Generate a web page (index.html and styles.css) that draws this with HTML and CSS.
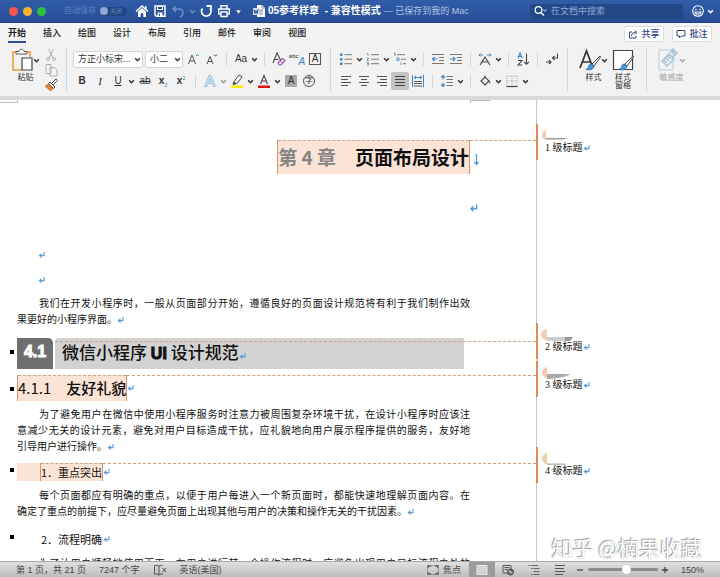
FILE: index.html
```html
<!DOCTYPE html>
<html lang="zh-CN">
<head>
<meta charset="utf-8">
<title>05参考样章</title>
<link rel="stylesheet" href="styles.css">
</head>
<body>
<svg class="defs" aria-hidden="true">
  <symbol id="chev" viewBox="0 0 6 6"><path d="M1 2l2 2 2-2" fill="none" stroke="currentColor" stroke-width="1.3"/></symbol>
  <symbol id="ret" viewBox="0 0 7 8"><path d="M6 1v3.600H2M3.600 2.600L1.400 4.600l2.200 2" fill="none" stroke="#5b9bd5" stroke-width="1.100"/></symbol>
  <symbol id="brush" viewBox="0 0 16 16"><path d="M15 1L7 9l2 2 6.500-9z" fill="#fff" stroke="#444" stroke-width="1"/><path d="M6.500 9c-2 0-3 1-3 3 0 1-1 2-2.500 2 2 1.500 7 1.500 8-2.500z" fill="#4a9ad8" stroke="#2f6ea8" stroke-width=".8"/></symbol>
</svg>

<header class="titlebar">
  <div class="lights"><i class="red"></i><i class="amber"></i><i class="green"></i></div>
  <label class="autosave">自动保存 <input type="checkbox" role="switch"><span class="toggle">关闭</span></label>
  <nav class="quick" aria-label="快速访问">
    <button aria-label="主页"><svg class="ic" viewBox="0 0 14 14"><path d="M1 7.500L7 2l6 5.500M10.800 2v3" fill="none" stroke="#fff" stroke-width="1.500"/><path d="M3 7.500L7 4l4 3.500V13H8.300V9.300H5.700V13H3z" fill="#fff"/></svg></button>
    <button aria-label="保存"><svg class="ic" viewBox="0 0 14 14"><path d="M2 2h10v10.300H3.300L2 11z" fill="none" stroke="#fff" stroke-width="1.500"/><path d="M4 2h6v4H4zM4.500 8.500h5V12h-5z" fill="#fff"/><path d="M5 3h4v2H5zM6 9.700h1V12H6z" fill="#28529c"/></svg></button>
    <button class="dim" aria-label="撤销"><svg class="ic" viewBox="0 0 14 14"><path d="M5 2L2 5l3 3M2 5h6c5 0 5 6 1 8" fill="none" stroke="currentColor" stroke-width="1.400"/></svg></button>
    <button class="dim more" aria-label="撤销选项"><svg class="chev"><use href="#chev"/></svg></button>
    <button aria-label="重做"><svg class="ic" viewBox="0 0 14 14"><path d="M3.500 4.500a4.700 4.700 0 1 0 7.500 0M7.500 2H12v4.500" fill="none" stroke="#fff" stroke-width="1.800"/></svg></button>
    <button aria-label="打印"><svg class="ic" viewBox="0 0 14 14"><path d="M4 5V1.700h6V5M3.500 10H1.700V5h10.600v5h-1.800M4 8h6v4.500H4z" fill="none" stroke="#fff" stroke-width="1.400"/></svg></button>
    <button class="more" aria-label="自定义"><svg class="chev" viewBox="0 0 6 6"><path d="M1 2h4L3 5z" fill="#fff"/></svg></button>
  </nav>
  <div class="doc-title">
    <svg class="ic" viewBox="0 0 14 14"><path d="M5 1h5l3 3v9H5z" fill="#fff"/><path d="M10 1v3h3M7 6h4M7 8h4M7 10h4" stroke="#7a8cab" fill="none"/><path d="M1 4h6v7H1z" fill="#d7deeb"/><path d="M2 5.500l1 4 1-3 1 3 1-4" fill="none" stroke="#28529c"/></svg>
    <b>05参考样章 &nbsp;- 兼容性模式</b><span>— 已保存到我的 Mac</span>
  </div>
  <label class="search">
    <svg class="ic" viewBox="0 0 14 14"><circle cx="5.500" cy="6" r="3.300" fill="none" stroke="#fff" stroke-width="1.200"/><path d="M8 8.500L11 11.500" stroke="#fff" stroke-width="1.300"/><path d="M10 5.500l1.700 1.700 1.700-1.700" fill="none" stroke="#fff"/></svg>
    <input type="search" placeholder="在文档中搜索" aria-label="在文档中搜索">
  </label>
  <button class="smile" aria-label="反馈"><svg class="ic" viewBox="0 0 14 14"><g fill="none" stroke="#fff" stroke-width="1.100"><circle cx="7" cy="7" r="5.300"/><path d="M4 8c1 3 5 3 6 0z"/></g><circle cx="5" cy="5.500" r=".8" fill="#fff"/><circle cx="9" cy="5.500" r=".8" fill="#fff"/></svg><svg class="chev"><use href="#chev"/></svg></button>
</header>

<div class="tabs">
  <nav>
    <a href="#" class="active">开始</a><a href="#">插入</a><a href="#">绘图</a><a href="#">设计</a><a href="#">布局</a><a href="#">引用</a><a href="#">邮件</a><a href="#">审阅</a><a href="#">视图</a>
  </nav>
  <div class="actions">
    <button><svg class="small" viewBox="0 0 10 10"><path d="M4 3H1.500v6H8V7M3.500 7c0-3 2-3.500 4-3.500M6.500 1.500l2.500 2-2.500 2" fill="none" stroke="#33466f"/></svg>共享</button>
    <button><svg class="small" viewBox="0 0 10 10"><path d="M1 1.500h8v5.500H5.500L3.500 9V7H1z" fill="none" stroke="#33466f"/></svg>批注</button>
  </div>
</div>

<div class="ribbon">
  <section class="group clipboard">
    <button class="big">
      <span class="face"><svg class="large" viewBox="0 0 22 24"><path d="M5 4H2v18h9M16 4h3v5" fill="none" stroke="#ee9a3a" stroke-width="1.600"/><path d="M5 6V3.500h3C8 .5 13 .5 13 3.500h3V6z" fill="#fff" stroke="#555"/><path d="M11 10h10v12H11z" fill="#fff" stroke="#444" stroke-width="1.200"/></svg><svg class="chev"><use href="#chev"/></svg></span>
      <span>粘贴</span>
    </button>
    <div class="stack">
      <button aria-label="剪切"><svg class="ic" viewBox="0 0 14 14"><g fill="none" stroke="#b0b0b0"><path d="M4.500 1L9 10M9.500 1L5 10"/><circle cx="4" cy="11" r="1.500"/><circle cx="10" cy="11" r="1.500"/></g></svg></button>
      <button aria-label="复制"><svg class="ic" viewBox="0 0 14 14"><path d="M2 1.500h5v9H2zM6 4.500h4.500L13 7v6H6z" fill="#f4f4f4" stroke="#b0b0b0"/></svg></button>
      <button aria-label="格式刷"><svg class="ic" viewBox="0 0 14 14"><path d="M8 5l4-4 1.500 1.500-4 4" fill="#fff" stroke="#444"/><path d="M6 4l5 5-1.500 1.500-5-5z" fill="#fff" stroke="#444"/><path d="M4.500 6L9 10.500 6.500 13 1 8z" fill="#e8823a" stroke="#b55c1c" stroke-width=".6"/></svg></button>
    </div>
  </section>

  <section class="group">
    <div class="row">
      <span class="pick font"><select aria-label="字体"><option>方正小标宋...</option></select><svg class="chev"><use href="#chev"/></svg></span>
      <span class="pick size"><select aria-label="字号"><option>小二</option></select><svg class="chev"><use href="#chev"/></svg></span>
      <button aria-label="增大字号"><svg class="ic" viewBox="0 0 14 14"><path d="M1.500 12L5 3l3.500 9M2.800 9h4.500" fill="none" stroke="#555"/><path d="M9 4l1.500-1.700L12 4" fill="none" stroke="#3a7"/></svg></button>
      <button aria-label="减小字号"><svg class="ic" viewBox="0 0 14 14"><path d="M2 12l3-7.500L8 12M3 9.500h4" fill="none" stroke="#555"/><path d="M9 2.500l1.500 1.700L12 2.500" fill="none" stroke="#357"/></svg></button>
      <i class="sep"></i>
      <button>Aa</button><button class="more" aria-label="大小写选项"><svg class="chev"><use href="#chev"/></svg></button>
      <i class="sep"></i>
      <button aria-label="清除格式"><svg class="ic" viewBox="0 0 14 14"><path d="M1 11L5 1l3.500 7M2.500 7.500h4" fill="none" stroke="#444" stroke-width="1.100"/><path d="M6 11l4.500-4.500 2.500 2L9 13H7.500z" fill="#fff" stroke="#9a4fb0" stroke-width="1.200"/><path d="M8 9l2.500 2" stroke="#9a4fb0"/></svg></button>
      <button class="phonetic" aria-label="拼音指南"><small>abc</small><em>A</em></button>
      <button><span class="boxed">A</span></button>
    </div>
    <div class="row">
      <button><b>B</b></button><button><i class="serif">I</i></button><button><u>U</u></button><button class="more" aria-label="下划线选项"><svg class="chev"><use href="#chev"/></svg></button>
      <button><s>ab</s></button><button><span><b>x</b><sub>2</sub></span></button><button><span><b>x</b><sup>2</sup></span></button>
      <i class="sep"></i>
      <button aria-label="文本效果"><svg class="ic" viewBox="0 0 14 14"><path d="M1.500 12.500L6 1.500h2l4.500 11h-2.300L9 9.500H5l-1.200 3zM5.700 7.500h2.600L7 4z" fill="#d5e6f3" stroke="#9dbfd9"/></svg></button><button class="more pale" aria-label="文本效果选项"><svg class="chev"><use href="#chev"/></svg></button>
      <button aria-label="突出显示"><svg class="ic" viewBox="0 0 14 14"><path d="M1 11.500h12V14H1z" fill="#ffee00"/><path d="M4 7.500l5-6.500 3 2-5 6.500-4 1z" fill="#fff" stroke="#444"/><path d="M4 7.500l3 2-4 1z" fill="#555"/></svg></button><button class="more" aria-label="突出显示选项"><svg class="chev"><use href="#chev"/></svg></button>
      <button aria-label="字体颜色"><svg class="ic" viewBox="0 0 14 14"><path d="M1 11.500h12V14H1z" fill="#d6140a"/><path d="M3.500 10L7 1.500l3.500 8.500M4.800 7h4.500" fill="none" stroke="#444" stroke-width="1.100"/></svg></button><button class="more" aria-label="字体颜色选项"><svg class="chev"><use href="#chev"/></svg></button>
      <button><span class="shaded">A</span></button>
      <button><span class="ringed">字</span></button>
    </div>
  </section>

  <section class="group">
    <div class="row">
      <button aria-label="项目符号"><svg class="ic" viewBox="0 0 14 14"><path d="M1 1.500h2.500V4H1zM1 6h2.500v2.500H1zM1 10.500h2.500V13H1z" fill="#3f86c2"/><path d="M5.500 2.700H13M5.500 7.200H13M5.500 11.700H13" stroke="#777"/></svg></button><button class="more" aria-label="项目符号选项"><svg class="chev"><use href="#chev"/></svg></button>
      <button aria-label="编号"><svg class="ic" viewBox="0 0 14 14"><path d="M1 1.500h1V4M1 6h1.500L1 8.500h1.700M1 10.500h1.500V13H1M2.500 11.700H1" fill="none" stroke="#5b93c4" stroke-width=".9"/><path d="M5 2.700h8M5 7.200h8M5 11.700h8" stroke="#777"/></svg></button><button class="more" aria-label="编号选项"><svg class="chev"><use href="#chev"/></svg></button>
      <button aria-label="多级列表"><svg class="ic" viewBox="0 0 14 14"><path d="M1 1h1v3M4 6h2v2.500H4zM8 10.500v2.500" fill="none" stroke="#5b93c4"/><path d="M4 2.700h8M8 7.200h5M10 11.700h3" stroke="#777"/></svg></button><button class="more" aria-label="多级列表选项"><svg class="chev"><use href="#chev"/></svg></button>
      <i class="sep"></i>
      <button aria-label="减少缩进"><svg class="ic" viewBox="0 0 14 14"><path d="M1 2.500h12M8 5.500h5M8 8.500h5M1 11.500h12" stroke="#777"/><path d="M6.500 7h-5M3.500 5l-2 2 2 2" fill="none" stroke="#3f86c2" stroke-width="1.200"/></svg></button>
      <button aria-label="增加缩进"><svg class="ic" viewBox="0 0 14 14"><path d="M1 2.500h12M8 5.500h5M8 8.500h5M1 11.500h12" stroke="#777"/><path d="M1 7h5M4 5l2 2-2 2" fill="none" stroke="#3f86c2" stroke-width="1.200"/></svg></button>
      <i class="sep"></i>
      <button aria-label="中文版式"><svg class="ic" viewBox="0 0 14 14"><path d="M2 13l5-8 5 8M4 10h6" fill="none" stroke="#444" stroke-width="1.100"/><path d="M5 3H1M2.500 1.500L1 3l1.500 1.500M9 3h4M11.500 1.500L13 3l-1.500 1.500" fill="none" stroke="#3f86c2"/></svg></button><button class="more" aria-label="中文版式选项"><svg class="chev"><use href="#chev"/></svg></button>
      <i class="sep"></i>
      <button aria-label="排序"><svg class="ic" viewBox="0 0 14 14"><path d="M2 6l2-5 2 5M2.500 4.500h3" fill="none" stroke="#3f86c2" stroke-width="1.100"/><path d="M2 8.500h4L2 13h4.300M10.500 1.500V12M8 9.800l2.500 2.500L13 9.800" fill="none" stroke="#444" stroke-width="1.100"/></svg></button>
      <i class="sep"></i>
      <button aria-label="显示段落标记"><svg class="ic" viewBox="0 0 14 14"><path d="M1 10h5M4 8l2 2-2 2M12.500 1.500V6H7.500M9.500 4l-2 2 2 2" fill="none" stroke="#444" stroke-width="1.100"/></svg></button>
    </div>
    <div class="row">
      <button aria-label="左对齐"><svg class="ic" viewBox="0 0 14 14"><path d="M2 2.500h10M2 5.500h7M2 8.500h10M2 11.500h7" stroke="#555"/></svg></button>
      <button aria-label="居中"><svg class="ic" viewBox="0 0 14 14"><path d="M2 2.500h10M4 5.500h6M2 8.500h10M4 11.500h6" stroke="#555"/></svg></button>
      <button aria-label="右对齐"><svg class="ic" viewBox="0 0 14 14"><path d="M2 2.500h10M5 5.500h7M2 8.500h10M5 11.500h7" stroke="#555"/></svg></button>
      <button class="pressed" aria-label="两端对齐"><svg class="ic" viewBox="0 0 14 14"><path d="M2 2.500h10M2 5.500h10M2 8.500h10M2 11.500h10" stroke="#444"/></svg></button>
      <button aria-label="分散对齐"><svg class="ic" viewBox="0 0 14 14"><path d="M1.500 1v12M12.500 1v12M3 3.500h8M5 2L3 3.500 5 5M9 2l2 1.500L9 5" fill="none" stroke="#3f86c2"/><path d="M3 7.500h8M3 9.500h8M3 12h8" stroke="#555"/></svg></button>
      <i class="sep"></i>
      <button aria-label="行距"><svg class="ic" viewBox="0 0 14 14"><path d="M3 1.500v4M1 3.500l2-2 2 2M3 8.500v4M1 10.500l2 2 2-2" fill="none" stroke="#3f86c2" stroke-width="1.100"/><path d="M6.500 2.500H13M6.500 5.500H13M6.500 8.500H13M6.500 11.500H13" stroke="#777"/></svg></button><button class="more" aria-label="行距选项"><svg class="chev"><use href="#chev"/></svg></button>
      <i class="sep"></i>
      <button aria-label="底纹"><svg class="ic" viewBox="0 0 14 14"><path d="M3 7l4-4 4 4-4 4zM7 3V1.500" fill="none" stroke="#444" stroke-width="1.100"/><path d="M10.500 6c2 1 2 3 1.500 4-1-1-1-3-1.500-4" fill="#444"/></svg></button><button class="more" aria-label="底纹选项"><svg class="chev"><use href="#chev"/></svg></button>
      <button aria-label="边框"><svg class="ic" viewBox="0 0 14 14"><path d="M2 2h10v10M2 2v10M7 2v10M2 7h10" fill="none" stroke="#aaa" stroke-dasharray="1 1"/><path d="M1.500 12.500h11" stroke="#444" stroke-width="1.200"/></svg></button><button class="more" aria-label="边框选项"><svg class="chev"><use href="#chev"/></svg></button>
    </div>
  </section>

  <section class="group styles">
    <button class="big">
      <span class="face"><svg class="large" viewBox="0 0 22 24"><path d="M1 20L7.500 3 14 20M3.500 14h8" fill="none" stroke="#333" stroke-width="1.700"/><use href="#brush" x="6" y="7" width="16" height="16"/></svg><svg class="chev"><use href="#chev"/></svg></span>
      <span>样式</span>
    </button>
    <button class="big">
      <span class="face"><svg class="large" viewBox="0 0 22 24"><path d="M1.500 2.500h19v19h-19z" fill="#fff" stroke="#444" stroke-width="1.200"/><use href="#brush" x="6" y="7" width="16" height="16"/></svg></span>
      <span>样式<br>窗格</span>
    </button>
  </section>

  <section class="group sens">
    <button class="big" disabled>
      <span class="face"><svg class="large" viewBox="0 0 22 24"><path d="M2 2h14v20H2z" fill="none" stroke="#b5cfdd"/><path d="M5 13l7-7 5 5-7 7zM13 5l3-4 4 4-4 4M7 12l3 3M9 10l3 3M11 8l3 3M15 3l3 3" fill="none" stroke="#9fc0d2" stroke-width="1.300"/></svg><svg class="chev"><use href="#chev"/></svg></span>
      <span>敏感度</span>
    </button>
  </section>
</div>

<main>
  <article>
    <div class="corners"><i></i><i></i></div>
    <h1><span class="mark"><span class="num">第 4 章</span>　页面布局设计</span><span class="link"><svg viewBox="0 0 7 12"><path d="M3.500 0v10M1.500 8l2 2.500 2-2.500" fill="none" stroke="#5b9bd5" stroke-width="1.300"/></svg></span></h1>
    <div class="blank end"><svg class="ret big-ret"><use href="#ret"/></svg></div>
    <div class="blank"><svg class="ret"><use href="#ret"/></svg></div>
    <div class="blank"><svg class="ret"><use href="#ret"/></svg></div>
    <p><span class="line first">我们在开发小程序时，一般从页面部分开始，遵循良好的页面设计规范将有利于我们制作出效</span><span>果更好的小程序界面。</span><svg class="ret"><use href="#ret"/></svg></p>
    <h2><span class="tab">4.1</span><span class="bar">微信小程序 <b>UI</b> 设计规范<svg class="ret"><use href="#ret"/></svg></span></h2>
    <h3><span class="mark">4.1.1　<b>友好礼貌</b></span><span class="link"><svg class="ret"><use href="#ret"/></svg></span></h3>
    <p><span class="line first">为了避免用户在微信中使用小程序服务时注意力被周围复杂环境干扰，在设计小程序时应该注</span><span class="line">意减少无关的设计元素，避免对用户目标造成干扰，应礼貌地向用户展示程序提供的服务，友好地</span><span>引导用户进行操作。</span><svg class="ret"><use href="#ret"/></svg></p>
    <h4><span class="pad"></span><span class="mark">1．重点突出</span><span class="link"><svg class="ret"><use href="#ret"/></svg></span></h4>
    <p><span class="line first">每个页面都应有明确的重点，以便于用户每进入一个新页面时，都能快速地理解页面内容。在</span><span>确定了重点的前提下，应尽量避免页面上出现其他与用户的决策和操作无关的干扰因素。</span><svg class="ret"><use href="#ret"/></svg></p>
    <h4 class="plain"><span class="pad"></span><span class="mark">2．流程明确</span><span class="link"><svg class="ret"><use href="#ret"/></svg></span></h4>
    <p><span class="line first">为了让用户顺畅地使用页面，在用户进行某一个操作流程时，应避免出现用户目标流程之外的</span></p>
  </article>
  <aside>
    <div class="note one"><svg viewBox="0 0 34 12"><path d="M5 0Q1 1 1 6q1 4 4 4z" fill="#f2cdb3"/><path d="M5 8h22l-5 1.500H5z" fill="#999"/></svg><span>1 级标题<svg class="ret"><use href="#ret"/></svg></span></div>
    <div class="note two"><svg viewBox="0 0 34 12"><path d="M6 0Q0 1 0 6q1 5 6 5z" fill="#f2cdb3"/><path d="M6 8h26l-4 4H6z" fill="#ccc"/><path d="M24 8h8l-3 4h-5z" fill="#999"/></svg><span>2 级标题<svg class="ret"><use href="#ret"/></svg></span></div>
    <div class="note three"><svg viewBox="0 0 34 12"><path d="M6 0Q1 1 1 6q1 5 5 5z" fill="#f2cdb3"/><path d="M6 7h23q-4 4-23 5z" fill="#aaa"/></svg><span>3 级标题<svg class="ret"><use href="#ret"/></svg></span></div>
    <div class="note four"><svg viewBox="0 0 34 12"><path d="M6 0Q1 1 1 6q1 5 5 5z" fill="#edcfa8"/><path d="M6 10.500h18v1.300H6z" fill="#aaa"/></svg><span>4 级标题<svg class="ret"><use href="#ret"/></svg></span></div>
  </aside>
  <div class="watermark">知乎 @楠果收藏</div>
</main>

<footer>
  <span>第 1 页，共 21 页</span>
  <span>7247 个字</span>
  <svg class="ic" viewBox="0 0 14 14"><path d="M6 3Q4 2 1.500 2.500v8.500Q4 10.500 6 12zM6 3q2-1 3.500-.5M6 12q2-1.500 4-1M9.500 5l3.500 4M13 5L9.500 9" fill="none" stroke="#555"/></svg>
  <span>英语(美国)</span>
  <div class="controls">
    <button class="focus"><svg class="ic" viewBox="0 0 14 14"><path d="M2 5V3h3M9 3h3v2M12 9v2H9M5 11H2V9" fill="none" stroke="#555" stroke-width="1.300"/><path d="M1.500 2.500h11v9h-11z" fill="none" stroke="#777" stroke-width=".6"/></svg>焦点</button>
    <button class="view on" aria-label="页面视图"><svg class="ic" viewBox="0 0 14 14"><path d="M2 2.500h10v9H2z" fill="#ccc" stroke="#eee"/><path d="M4 5h6M4 7h6M4 9h6" stroke="#ddd"/></svg></button>
    <button class="view" aria-label="Web 版式"><svg class="ic" viewBox="0 0 14 14"><path d="M8 10H2V2.500h8V6M3.500 4.500h5M3.500 6.500h3" fill="none" stroke="#555"/><circle cx="9.500" cy="9" r="3" fill="#777" stroke="#444"/><path d="M7.500 8l4 2" stroke="#ddd"/></svg></button>
    <button class="view" aria-label="大纲"><svg class="ic" viewBox="0 0 14 14"><path d="M1.500 2.500H3M4 2.500h7M4 5.500h1.500M6.500 5.500h6M6.500 8.500h6M4 11.500h1.500M6.500 11.500h6" stroke="#666"/></svg></button>
    <button class="view" aria-label="草稿"><svg class="ic" viewBox="0 0 14 14"><path d="M2 2.500h10M2 5.500h9M2 8.500h10M2 11.500h8" stroke="#555"/></svg></button>
    <button class="step" aria-label="缩小"><svg class="small" viewBox="0 0 10 10"><path d="M2 5h6" stroke="#444" stroke-width="1.300"/></svg></button>
    <input class="zoom" type="range" min="0" max="100" value="56" aria-label="缩放">
    <button class="step" aria-label="放大"><svg class="small" viewBox="0 0 10 10"><path d="M2 5h6M5 2v6" stroke="#444" stroke-width="1.300"/></svg></button>
    <span class="percent">150%</span>
  </div>
</footer>
</body>
</html>
```
FILE: styles.css
```css
* { box-sizing: border-box; }
body {
  margin: 0;
  height: 100vh;
  display: flex;
  flex-direction: column;
  overflow: hidden;
  background: #fff;
  color: #333;
  font: 9px/12px "Liberation Sans", "Noto Sans CJK SC", sans-serif;
}
button, input, select { font: inherit; color: inherit; margin: 0; padding: 0; border: 0; background: none; }
button { display: flex; align-items: center; justify-content: center; white-space: nowrap; }
a { color: inherit; text-decoration: none; }
svg { display: block; flex: none; }
.defs { position: absolute; width: 0; height: 0; }
.ic { width: 14px; height: 14px; }
.chev { width: 7px; height: 7px; }
.small { width: 10px; height: 10px; }
.large { width: 22px; height: 24px; }

/* title bar */
.titlebar {
  flex: none;
  height: 23px;
  display: flex;
  align-items: center;
  padding: 0 6px 0 9px;
  color: #fff;
  background: linear-gradient(#315da8, #264d95);
  border-bottom: 1px solid #1d3f80;
}
.lights { display: flex; gap: 5px; width: 55px; }
.lights i { width: 9px; height: 9px; border-radius: 50%; }
.red { background: #f6544d; }
.amber { background: #f7b42f; }
.green { background: #2cc240; }
.autosave { display: flex; align-items: center; gap: 4px; width: 69px; font-size: 8px; color: #6484bd; white-space: nowrap; }
.autosave input { position: absolute; opacity: 0; }
.toggle { display: flex; align-items: center; gap: 2px; width: 27px; height: 9px; border-radius: 5px; background: #234784; font-size: 6px; }
.toggle::before { content: ""; width: 8px; height: 8px; border-radius: 50%; background: #8ea9d6; }
.quick { display: flex; align-items: center; width: 119px; }
.quick button { width: 18px; }
.quick .more { width: 10px; }
.quick .dim { color: #6f8fc6; }
.doc-title { display: flex; align-items: center; gap: 2px; white-space: nowrap; }
.doc-title b { font-size: 10px; }
.doc-title span { margin-left: 1px; font-size: 9px; color: #b4c5e3; }
.search { display: flex; align-items: center; gap: 4px; width: 153px; height: 15px; margin-left: auto; padding-left: 3px; background: #234887; border-radius: 2px; }
.search input { flex: 1; min-width: 0; outline: 0; }
.search input::placeholder { color: #8fa8d2; }
.smile { gap: 2px; margin-left: 8px; }

/* tabs */
.tabs { flex: none; height: 22px; display: flex; align-items: center; justify-content: space-between; padding: 0 8px; background: #f4f4f4; }
.tabs nav { display: flex; gap: 17px; font-weight: 500; color: #222; }
.tabs a { height: 18px; line-height: 16px; border-bottom: 2px solid transparent; }
.tabs .active { border-color: #2b4f9e; font-weight: 700; }
.actions { display: flex; gap: 8px; }
.actions button { width: 40px; height: 16px; gap: 3px; border: 1px solid #dcdcdc; border-radius: 2px; background: #fff; color: #2a4583; font-weight: 500; }

/* ribbon */
.ribbon { flex: none; height: 55px; display: flex; padding: 3px 0 4px; background: #f2f2f2; border-bottom: 4px solid #d9d9d9; }
.group { padding: 0 6px; border-right: 1px solid #d6d6d6; }
.row { display: flex; align-items: center; height: 22px; }
.row button { width: 18px; height: 18px; font-size: 10px; }
.row .more { width: 9px; }
.row .pale { color: #999; }
.sep { width: 1px; height: 14px; margin: 0 5px; background: #d6d6d6; }
.clipboard { display: flex; width: 67px; padding: 0 8px 0 11px; justify-content: space-between; }
.big { flex-direction: column; justify-content: flex-start; gap: 2px; font-size: 8px; line-height: 8px; }
.face { display: flex; align-items: center; }
.stack { display: flex; flex-direction: column; gap: 1px; }
.pick { position: relative; height: 17px; margin-right: 2px; }
.pick select { appearance: none; width: 100%; height: 100%; padding: 0 4px; border: 1px solid #d2d2d2; border-radius: 2px; background: #fff; }
.pick .chev { position: absolute; right: 2px; top: 5px; }
.font { width: 70px; }
.size { width: 38px; }
.serif { font-family: "Liberation Serif", serif; font-size: 11px; }
.row sub, .row sup { font-size: 5px; line-height: 0; color: #2b8a9a; }
.phonetic small { font-size: 6px; align-self: flex-start; }
.phonetic em { font-size: 10px; color: #3f86c2; align-self: flex-end; }
.boxed, .shaded { width: 12px; height: 12px; line-height: 12px; }
.boxed { border: 1px solid #555; line-height: 10px; }
.shaded { background: #a8a8a8; }
.ringed { width: 12px; height: 12px; border: 1px solid #555; border-radius: 50%; font-size: 8px; line-height: 10px; }
.pressed { background: #c3c3c3; border-radius: 2px; }
.styles { display: flex; gap: 4px; width: 79px; padding: 0 6px 0 11px; }
.sens { border: 0; padding-left: 10px; color: #a5a5a5; }

/* document */
main { position: relative; flex: 1; min-height: 0; display: grid; grid-template-columns: minmax(0, 1fr) 184px; overflow: hidden; color: #111; }
article { padding-left: 17px; }
.corners { display: flex; justify-content: space-between; height: 4px; margin: 0 46px 36px -17px; }
.corners i { width: 18px; height: 3px; border: solid #bbb; border-width: 0 1px 1px 0; }
.corners i + i { width: 20px; border-width: 1px 0 0 1px; }
.ret { display: inline-block; width: 7px; height: 8px; vertical-align: -1px; }
.big-ret { width: 9px; height: 10px; }
h1, h2, h3, h4, p { margin: 0; font-weight: 400; }
h1, h2, h3, h4 { position: relative; display: flex; white-space: nowrap; font-family: "Noto Sans CJK SC", sans-serif; }
.mark { background: #fbe3d6; border: 1px solid #d89468; border-width: 0 1px; }
.mark, .link { position: relative; }
.mark::before, .link::before, .bar::before { content: ""; position: absolute; top: 0; left: 0; right: 0; border-top: 1px dashed #cfa284; }
.link { flex: 1; display: flex; align-items: center; }
h1 { justify-content: flex-end; height: 34px; font-size: 19px; line-height: 34px; font-weight: 700; }
h1 .link { flex: none; width: 66px; padding: 5px 0 0 3px; }
h1 .link svg { width: 7px; height: 12px; }
.num { color: #858585; }
.blank { display: flex; align-items: center; height: 25px; padding-left: 21px; }
.blank.end { justify-content: flex-end; height: 20px; margin: 24px 58px 24px 0; padding: 0; }
p { margin-right: 66px; font-size: 10px; line-height: 16px; font-family: "Noto Sans CJK SC", sans-serif; }
.blank + p { margin-top: 3px; }
.line { display: block; white-space: nowrap; text-align: justify; text-align-last: justify; }
.first { padding-left: 22px; }
h2::before, h3::before, h4::before { content: ""; position: absolute; left: -7px; top: 12px; width: 4px; height: 4px; background: #000; }
h2 { height: 31px; margin: 11px 0 6px; gap: 2px; font-size: 17px; line-height: 28px; font-weight: 500; }
.tab { width: 36px; text-align: center; background: #6f6f6f; color: #fff; border-top-right-radius: 5px; font-family: "Liberation Sans Narrow", "Liberation Sans", sans-serif; font-size: 16px; font-weight: 700; -webkit-text-stroke: 1px #fff; }
.bar { position: relative; flex: 1; margin-right: 72px; padding-left: 7px; background: #d2d2d2; border-top-left-radius: 4px; }
.bar b { font-family: "Liberation Sans Narrow", "Liberation Sans", sans-serif; font-size: 16px; -webkit-text-stroke: 1px #111; }
.bar::before { top: 3px; right: -72px; }
h3 { height: 26px; margin-bottom: 5px; font-size: 15px; line-height: 26px; }
h3 b { font-weight: 500; }
h4 { height: 18px; margin: 9px 0 6px; font-size: 11px; line-height: 18px; }
h4::before { top: 5px; }
.pad { width: 23px; background: #fbe3d6; }
.plain { margin: 11px 0 7px; }
.plain .pad, .plain .mark { background: none; border-color: transparent; }
.plain .mark::before, .plain .link::before { display: none; }

/* comments */
aside { border-left: 1px solid #c8c8c8; padding-top: 24px; }
.note { height: 36px; margin-left: -1px; padding: 6px 0 0 3px; border-left: 2px solid #e08a55; font: 10px/12px "Liberation Serif", "Noto Sans CJK SC", serif; white-space: nowrap; }
.note > svg { width: 34px; height: 12px; }
.note > span { display: block; padding-left: 4px; }
.one { margin-bottom: 163px; }
.two { margin-bottom: 2px; }
.three { margin-bottom: 50px; }
.watermark { position: absolute; right: 18px; bottom: 0; font: 21px/28px "Noto Sans CJK SC", sans-serif; color: #fff; text-shadow: -1px -1px 1px #999, 0 0 1px #aaa; }

/* status bar */
footer { flex: none; height: 16px; display: flex; align-items: center; gap: 13px; padding: 0 16px; background: linear-gradient(#e0e0e0, #bdbdbd); border-top: 1px solid #aaa; color: #444; white-space: nowrap; }
footer button { height: 15px; }
.controls { display: flex; align-items: center; margin-left: auto; }
.focus { gap: 3px; margin-right: 8px; }
.view { width: 26px; }
.on { background: #9c9c9c; }
.step { width: 15px; }
.zoom { appearance: none; width: 70px; height: 3px; border-radius: 2px; background: #8c8c8c; }
.zoom::-webkit-slider-thumb { appearance: none; width: 9px; height: 9px; border-radius: 50%; background: #fff; }
.percent { margin-left: 8px; }
```
